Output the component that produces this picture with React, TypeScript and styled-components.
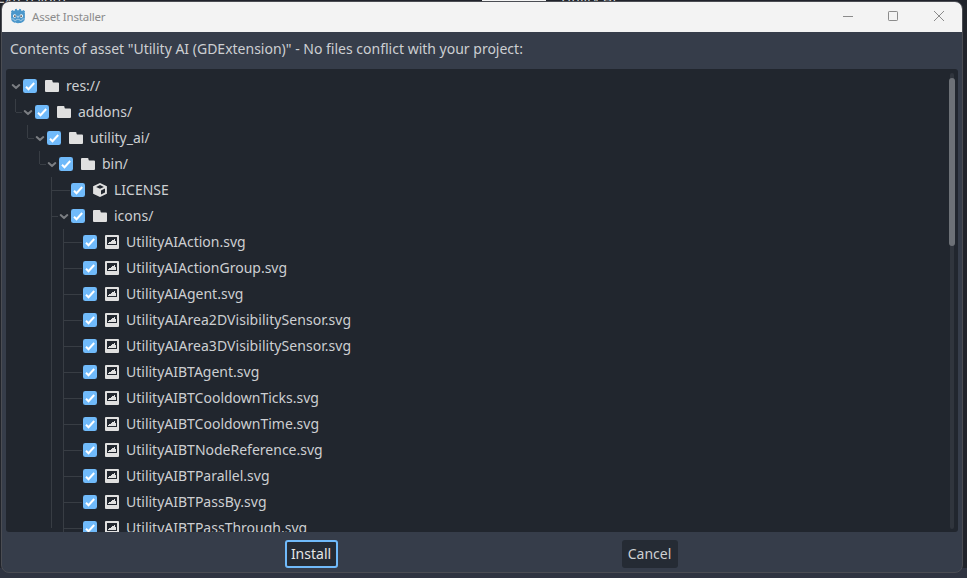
import React from "react";
import styled, { createGlobalStyle, css } from "styled-components";

const GlobalStyle = createGlobalStyle`
  * { box-sizing: border-box; }
  html, body { margin: 0; padding: 0; overflow: hidden; }
  body { font-family: "Noto Sans", sans-serif; font-size: 14px; color: #cdcfd2; background: #21252d; }
`;

const Desktop = styled.div`
  position: relative;
  width: 967px;
  height: 578px;
  overflow: hidden;
  background: linear-gradient(#21242b 0 568px, #2f3441 568px);
`;

const Backdrop = styled.div`
  position: absolute;
  inset: 0 0 auto 0;
  height: 5px;
  overflow: hidden;
  background: #20232b;
`;

const BackdropText = styled.span<{ $x: number }>`
  position: absolute;
  left: ${(p) => p.$x}px;
  top: -12px;
  line-height: 19px;
  white-space: nowrap;
`;

const BackdropTab = styled.div`
  position: absolute;
  left: 482px;
  top: 0;
  width: 64px;
  height: 1px;
  background: #f3f3f3;
`;

const Window = styled.main`
  position: absolute;
  left: 1px;
  top: 1px;
  width: 962px;
  height: 572px;
  display: flex;
  flex-direction: column;
  border: 1px solid #4b4d53;
  border-radius: 8px;
  overflow: hidden;
  background: #363d4a;
`;

const TitleBar = styled.header`
  flex: none;
  display: flex;
  align-items: center;
  height: 30px;
  padding: 0 17px 2px 8px;
  background: #f3f3f3;
`;

const Title = styled.span`
  flex: 1;
  margin: 2px 0 0 6px;
  font-size: 11.5px;
  letter-spacing: -0.2px;
  line-height: 16px;
  color: #8b8b8b;
`;

const Controls = styled.div`
  display: flex;
  align-items: center;
  gap: 34px;
`;

const Message = styled.p`
  flex: none;
  height: 37px;
  margin: 0;
  padding: 7px 8px 0;
  line-height: 19px;
`;

const TreePanel = styled.section`
  flex: none;
  display: flex;
  height: 463px;
  margin: 0 4px;
  padding-top: 4px;
  border-radius: 3px;
  overflow: hidden;
  background: #21262e;
`;

const Rows = styled.ul`
  flex: 1;
  margin: 0;
  padding: 0;
  list-style: none;
`;

const Row = styled.li<{ $root: boolean }>`
  display: flex;
  align-items: center;
  height: 26px;
  padding-left: ${(p) => (p.$root ? 4 : 9)}px;
`;

const Guide = styled.span<{ $line?: "none" | "full" | "half"; $joint?: "short" | "long" }>`
  flex: none;
  align-self: flex-start;
  width: ${(p) => (p.$joint ? 7 : 12)}px;
  height: ${(p) => (p.$line === "half" ? 13 : 26)}px;
  border-left: 1px solid ${(p) => (p.$line === "none" ? "transparent" : "#383d44")};
  ${(p) =>
    p.$joint &&
    css`
      &::after {
        content: "";
        display: block;
        width: ${p.$joint === "long" ? 18 : 6}px;
        height: 13px;
        border-bottom: 1px solid #383d44;
      }
    `}
`;

const Twist = styled.span`
  flex: none;
  display: flex;
  justify-content: center;
  width: 13px;
  padding-right: 1px;
`;

const IconSlot = styled.span`
  flex: none;
  display: flex;
  margin: 0 6px 0 7px;
`;

const CheckSlot = styled.span`
  flex: none;
  display: flex;
`;

const Name = styled.span<{ $loose: boolean }>`
  height: 20px;
  line-height: 19px;
  letter-spacing: ${(p) => (p.$loose ? "0.05px" : "normal")};
  white-space: nowrap;
`;

const Track = styled.div`
  flex: none;
  width: 4px;
  height: 456px;
  margin: 0 4px 0 0;
  border-radius: 2px;
  background: #30353d;
`;

const Grabber = styled.div`
  width: 6px;
  height: 168px;
  margin: 5px -1px 0;
  border-radius: 3px;
  background: #6d7177;
`;

const Footer = styled.footer`
  display: flex;
  padding-top: 8px;
`;

const Button = styled.button<{ $focused?: boolean }>`
  height: 28px;
  width: ${(p) => (p.$focused ? 53 : 56)}px;
  margin-left: ${(p) => (p.$focused ? 283 : 284)}px;
  padding: 0 1px 2px 0;
  border: ${(p) => (p.$focused ? "2px solid #70bafa" : "0")};
  border-radius: 3px;
  font: inherit;
  line-height: 19px;
  color: ${(p) => (p.$focused ? "#e4e5e6" : "#cdcfd2")};
  background: #252b34;
`;

const GodotLogo = () => (
  <svg width="16" height="16" viewBox="0 0 16 16">
    <path fill="#4b97cb" d="M5 1.200 6.600.8l.6 1.500h1.600L9.400.8l1.600.4.2 1.400.8.400 1.500-1 1.600 1.500-.6 1.200.4.200v5.600c0 3-3 4.700-6.900 4.700S1.100 13.500 1.100 10.500V4.900l.4-.2L.9 3.500 2.500 2l1.500 1 .8-.4z" />
    <path fill="none" stroke="#c7dff0" strokeWidth=".6" d="M1.200 10.800l2.700.3.400 1.500h1.800l.3-1.200h3.200l.3 1.200h1.800l.4-1.500 2.700-.3" />
    <circle cx="4.700" cy="8" r="1.700" fill="#fff" /><circle cx="11.300" cy="8" r="1.700" fill="#fff" />
    <circle cx="4.900" cy="8.100" r=".9" fill="#414042" /><circle cx="11.100" cy="8.100" r=".9" fill="#414042" />
    <path d="M8 7.800v1.800" stroke="#fff" />
  </svg>
);

const Chevron = () => (
  <svg width="12" height="12" viewBox="0 0 12 12">
    <path d="M2.700 5.100 6 8.100 9.300 5.100" fill="none" stroke="#7b7e83" strokeWidth="2" strokeLinecap="round" strokeLinejoin="round" />
  </svg>
);

const Check = () => (
  <svg width="14" height="14" viewBox="0 0 14 14">
    <rect width="14" height="14" rx="2.300" fill="#70bafa" />
    <path d="m3 7.700 2.500 2.500 5.700-6.200" fill="none" stroke="#fff" strokeWidth="2" />
  </svg>
);

type Kind = "folder" | "file" | "image";

const KindIcon = ({ kind }: { kind: Kind }) => (
  <svg width="16" height="16" viewBox="0 0 16 16">
    {kind === "folder" && <path fill="#e0e0e0" d="M2 2a1 1 0 0 0-1 1v10a1 1 0 0 0 1 1h12a1 1 0 0 0 1-1V5.500a1 1 0 0 0-1-1H9.500a1 1 0 0 1-1-1V3a1 1 0 0 0-1-1z" />}
    {kind === "file" && (
      <path fill="#e0e0e0" fillRule="evenodd" d="M8 .9 1.100 4.300v7.400L8 15.100l6.900-3.400V4.300zM8 3l3.900 1.900L8 6.800 4.100 4.900zM9 8.500l4-2v3.900l-4 2z" />
    )}
    {kind === "image" && (
      <path fill="#e0e0e0" fillRule="evenodd" d="M2 1a1 1 0 0 0-1 1v12a1 1 0 0 0 1 1h12a1 1 0 0 0 1-1V2a1 1 0 0 0-1-1zm1 2h10v8H3zm7 2v1H8v1H7v1H5v1H4v1h8V7h-1V5z" />
    )}
  </svg>
);

type Item = { name: string; depth: number; kind: Kind };

const items: Item[] = [
  { name: "res://", depth: 0, kind: "folder" },
  { name: "addons/", depth: 1, kind: "folder" },
  { name: "utility_ai/", depth: 2, kind: "folder" },
  { name: "bin/", depth: 3, kind: "folder" },
  { name: "LICENSE", depth: 4, kind: "file" },
  { name: "icons/", depth: 4, kind: "folder" },
  ...[
    "Action",
    "ActionGroup",
    "Agent",
    "Area2DVisibilitySensor",
    "Area3DVisibilitySensor",
    "BTAgent",
    "BTCooldownTicks",
    "BTCooldownTime",
    "BTNodeReference",
    "BTParallel",
    "BTPassBy",
    "BTPassThrough",
  ].map((n): Item => ({ name: `UtilityAI${n}.svg`, depth: 5, kind: "image" })),
];

const TreeRow = ({ item, last }: { item: Item; last: boolean }) => {
  const ancestors = Array.from({ length: Math.max(0, item.depth - 1) }, (_, i) => i + 1);
  const isFolder = item.kind === "folder";
  return (
    <Row $root={item.depth === 0}>
      {ancestors.map((level) => (
        <Guide key={level} $line={level < 4 ? "none" : last ? "half" : "full"} />
      ))}
      {item.depth > 0 && <Guide $line={item.depth < 4 ? "half" : "full"} $joint={isFolder ? "short" : "long"} />}
      <Twist>{isFolder && <Chevron />}</Twist>
      <CheckSlot><Check /></CheckSlot>
      <IconSlot><KindIcon kind={item.kind} /></IconSlot>
      <Name $loose={item.name.length > 30}>{item.name}</Name>
    </Row>
  );
};

export default function App() {
  return (
    <>
      <GlobalStyle />
      <Desktop>
        <Backdrop>
          <BackdropText $x={-3}>Extension)</BackdropText>
          <BackdropTab />
          <BackdropText $x={561}>Utility AI</BackdropText>
        </Backdrop>
        <Window>
          <TitleBar>
            <GodotLogo />
            <Title>Asset Installer</Title>
            <Controls>
              <svg width="12" height="12" viewBox="0 0 12 12"><path d="M2 6.500h10" stroke="#8b8b8b" /></svg>
              <svg width="12" height="12" viewBox="0 0 12 12"><rect x="1.500" y="1.500" width="9" height="9" rx=".7" fill="none" stroke="#8b8b8b" /></svg>
              <svg width="12" height="12" viewBox="0 0 12 12"><path d="m1 1 10 10M11 1 1 11" stroke="#8b8b8b" /></svg>
            </Controls>
          </TitleBar>
          <Message>Contents of asset "Utility AI (GDExtension)" - No files conflict with your project:</Message>
          <TreePanel>
            <Rows>
              {items.map((item, i) => (
                <TreeRow key={item.name} item={item} last={i === items.length - 1} />
              ))}
            </Rows>
            <Track><Grabber /></Track>
          </TreePanel>
          <Footer>
            <Button $focused>Install</Button>
            <Button>Cancel</Button>
          </Footer>
        </Window>
      </Desktop>
    </>
  );
}
